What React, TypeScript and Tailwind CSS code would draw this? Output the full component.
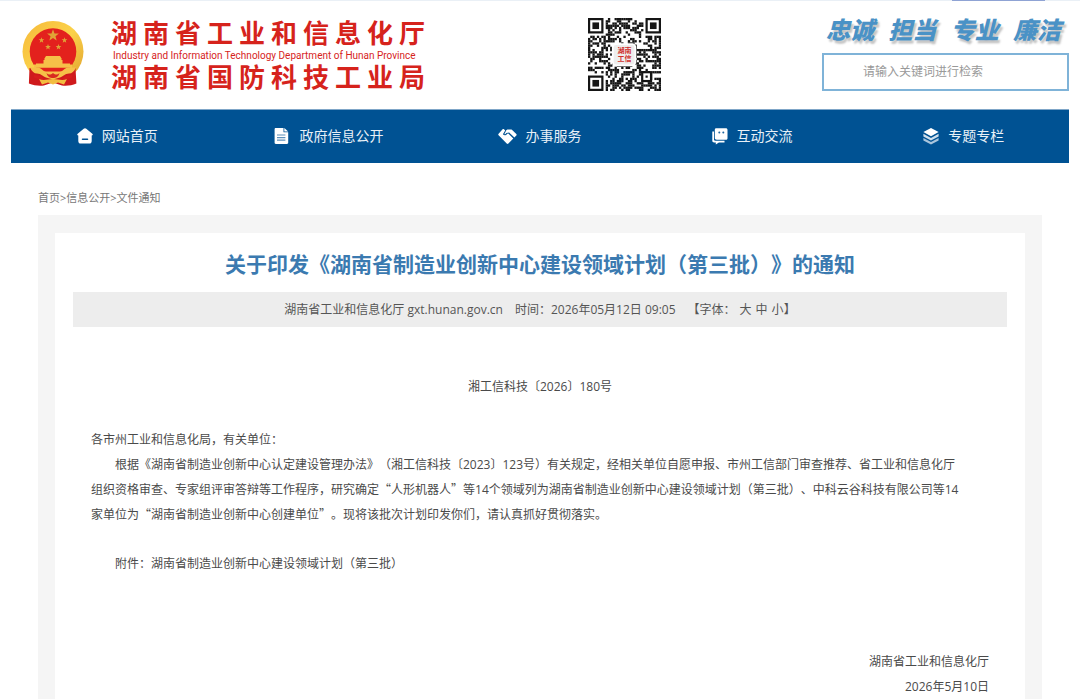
import type { ReactNode } from 'react'

type NavItem = {
	label: string
	icon: ReactNode
}

const HomeIcon = () => (
	<svg viewBox="0 0 18 18" className="size-[18px]" fill="#fff">
		<path d="M9 1.2c.5 0 .9.2 1.3.5l6 5c.8.7.6 1.6-.6 1.7V14c0 1.600-.9 2.600-2.500 2.600H4.800c-1.600 0-2.500-1-2.500-2.600V8.400C1.100 8.300.9 7.400 1.700 6.700l6-5C8.100 1.400 8.500 1.200 9 1.200z" />
		<path d="M6.500 12.300h5" stroke="#005293" strokeWidth="1.500" strokeLinecap="round" />
	</svg>
)

const FileIcon = () => (
	<svg viewBox="0 0 18 18" className="size-[18px]" fill="#fff">
		<path d="M2.800 1h7.700v4.200h4.700v10.600c0 .7-.5 1.200-1.200 1.200H2.800c-.7 0-1.200-.5-1.200-1.200V2.200C1.600 1.500 2.100 1 2.800 1z" />
		<path d="M11.300 1l3.900 3.500h-3.900z" />
		<path d="M4 8h8.400M4 10.600h8.400M4 13.200h8.400" stroke="#5d90ba" strokeWidth="1.200" />
	</svg>
)

const ServiceIcon = () => (
	<svg viewBox="0 0 19 18" className="h-[18px] w-[19px]" fill="#fff">
		<path d="M4.600 2.300c.4-.4 1-.4 1.400 0l1.200 1.200-2.300 3.800c1.300 1.500 3 1.300 4.300-.5l1.100-.3 5 5-4.900 5.100c-.5.6-1.200.6-1.700 0L.6 8.300c-.5-.5-.5-1.100 0-1.600z" />
		<path d="M8.300 3.200l1-.8h3.600c.4 0 .7.200 1 .4l4.400 4.300c.5.500.5 1 0 1.500l-1.900 2-5.300-5.200-2.700.700c-.6 1-1.300 1.300-2 .8z" />
	</svg>
)

const ChatIcon = () => (
	<svg viewBox="0 0 18 18" className="size-[18px]" fill="#fff">
		<path d="M5.200 1.200h9.600c1 0 1.700.7 1.700 1.600v8.400c0 1-.7 1.600-1.700 1.600H5.900c-1.400 0-2.100-.7-2.100-1.700V2.800c0-1 .5-1.600 1.400-1.600z" />
		<path d="M1.300 4.500h1.700v8c0 .8.500 1.200 1.300 1.200h9.200v1.700H7.900l-3.100 2.200v-2.200H3.200c-1.200 0-1.900-.6-1.900-1.700z" />
		<g fill="#1f67a1">
			<circle cx="8.300" cy="5.500" r="1" />
			<circle cx="12.300" cy="5.500" r="1" />
		</g>
	</svg>
)

const LayersIcon = () => (
	<svg viewBox="0 0 18 18" className="size-[18px]">
		<path d="M9 1l7.600 4L9 9.300 1.400 5z" fill="#fff" />
		<path d="M1.400 6.800L9 11.100l7.600-4.300v2.800L9 13.600 1.400 9.600z" fill="#cfdfec" />
		<path d="M1.400 11L9 15l7.600-4v2.400L9 17.400l-7.600-4z" fill="#a9c5dc" />
	</svg>
)

const navItems: NavItem[] = [
	{ label: '网站首页', icon: <HomeIcon /> },
	{ label: '政府信息公开', icon: <FileIcon /> },
	{ label: '办事服务', icon: <ServiceIcon /> },
	{ label: '互动交流', icon: <ChatIcon /> },
	{ label: '专题专栏', icon: <LayersIcon /> },
]

const slogans = ['忠诚', '担当', '专业', '廉洁']

const star = (cx: number, cy: number, r: number) =>
	Array.from({ length: 10 }, (_, i) => {
		const radius = i % 2 === 0 ? r : r * 0.42
		const angle = (Math.PI / 5) * i - Math.PI / 2
		return `${cx + radius * Math.cos(angle)},${cy + radius * Math.sin(angle)}`
	}).join(' ')

const Emblem = () => (
	<svg viewBox="0 0 62 66" className="h-[66px] w-[62px] shrink-0">
		<defs>
			<linearGradient id="gold" x1="0" y1="0" x2="1" y2="1">
				<stop offset="0" stopColor="#f6b93a" />
				<stop offset="0.5" stopColor="#fbd24a" />
				<stop offset="1" stopColor="#dfa02c" />
			</linearGradient>
		</defs>
		<circle cx="31" cy="30.500" r="30.500" fill="url(#gold)" />
		<path d="M7.500 47l-.6 15.500c5 2 10 2.500 15 2l9-3 9 3c5 .5 10 0 14.500-2L53.500 47z" fill="#cf1a1c" />
		<circle cx="31" cy="30.500" r="23.300" fill="#e3211d" />
		<g fill="#e0a336">
			<polygon points={star(31, 14.500, 6.200)} />
			<polygon points={star(19.500, 19.200, 3)} />
			<polygon points={star(42.500, 19.200, 3)} />
			<polygon points={star(26, 26, 3)} />
			<polygon points={star(36.500, 26, 3)} />
		</g>
		<g fill="#f6c048">
			<path d="M24 35h14l1.500 2.500v1.500h-17v-1.500z" />
			<path d="M21.500 39h19v3.500h7.500V45H14v-2.500h7.500z" />
			<path d="M12 43.500h38v3.200H12z" />
			<path d="M8 46.500h8c3 0 5 4 8 4h14c3 0 5-4 8-4h8c-2 4-4 6-7 6-4 0-6 3-9 4l-7 2-7-2c-3-1-5-4-9-4-3 0-5-2-7-6z" />
		</g>
		<path d="M12 54c4 0 7 1 10 3.500-4 1-7 .5-10-1zM50 54c-4 0-7 1-10 3.500 4 1 7 .5 10-1z" fill="#d71d1d" />
		<path d="M24.500 52c2 2 4 2 6.500 0 2.500 2 4.500 2 6.500 0-1 4-3.500 5-6.500 5s-5.500-1-6.500-5z" fill="#d92a1f" />
		<path d="M17 58c5 2 9 0 14 0s9 2 14 0l-3 5.500-6-2-5 2-5-2-6 2z" fill="#f2bd40" />
	</svg>
)

const QR_SIZE = 33

const isFinderZone = (x: number, y: number) =>
	(x < 8 && y < 8) || (x > QR_SIZE - 9 && y < 8) || (x < 8 && y > QR_SIZE - 9)

const qrModules = () => {
	const modules: { x: number; y: number }[] = []
	let seed = 20260512
	for (let y = 0; y < QR_SIZE; y++) {
		for (let x = 0; x < QR_SIZE; x++) {
			seed = (Math.imul(seed, 1664525) + 1013904223) >>> 0
			if (!isFinderZone(x, y) && seed / 4294967296 < 0.52) modules.push({ x, y })
		}
	}
	return modules
}

const Finder = ({ x, y }: { x: number; y: number }) => (
	<g>
		<rect x={x + 0.5} y={y + 0.5} width="6" height="6" fill="#fff" stroke="#151515" />
		<rect x={x + 2} y={y + 2} width="3" height="3" fill="#151515" />
	</g>
)

const QrCode = () => (
	<div className="relative size-[73px]">
		<svg viewBox="0 0 33 33" className="size-full" role="img">
			{qrModules().map(({ x, y }) => (
				<rect key={`${x}-${y}`} x={x} y={y} width="1.050" height="1.050" fill="#151515" />
			))}
			<Finder x={0} y={0} />
			<Finder x={26} y={0} />
			<Finder x={0} y={26} />
			<rect x="24" y="24" width="5" height="5" fill="#151515" />
			<rect x="25" y="25" width="3" height="3" fill="#fff" />
			<rect x="26" y="26" width="1" height="1" fill="#151515" />
			<rect x="11.200" y="11.800" width="10.200" height="9.600" rx="1.500" fill="#eee" stroke="#fff" strokeWidth="0.800" />
		</svg>
		<div className="absolute inset-0 flex flex-col items-center justify-center text-[7px] leading-[8px] font-bold text-[#d0302c]">
			<span>湖南</span>
			<span>工信</span>
		</div>
	</div>
)

const Header = () => (
	<header className="flex h-[108px] items-start justify-between pr-[11px] pl-[22px]">
		<div className="flex gap-[27px] pt-[18px]">
			<div className="pt-[2px]">
				<Emblem />
			</div>
			<div className="font-['Liberation_Sans','Noto_Sans_CJK_SC',sans-serif] whitespace-nowrap text-[#d6231c]">
				<p className="text-[26px] leading-[30px] font-bold tracking-[6px]">湖南省工业和信息化厅</p>
				<p className="pl-[2px] font-['Roboto'] text-[10px] leading-[14px]">
					Industry and Information Technology Department of Hunan Province
				</p>
				<p className="text-[26px] leading-[30px] font-bold tracking-[6px]">湖南省国防科技工业局</p>
			</div>
		</div>
		<div className="pt-[17px] pr-1">
			<QrCode />
		</div>
		<div className="w-[247px] pt-[12px]">
			<div className="flex justify-between pr-2 pl-1 text-2xl leading-[34px] font-black text-[#4a92c6] italic [text-shadow:2px_3px_2px_#c4c4c4]">
				{slogans.map((slogan) => (
					<span key={slogan}>{slogan}</span>
				))}
			</div>
			<input
				type="search"
				aria-label="搜索"
				placeholder="请输入关键词进行检索"
				className="mt-[6px] h-[38px] w-full border-2 border-[#7fb3d8] bg-white pr-4 pb-[2px] pl-[39px] text-xs outline-none placeholder:text-[#999]"
			/>
		</div>
	</header>
)

const Nav = () => (
	<nav className="mx-[11px] flex h-[54px] border-t border-[#7fa6c8] bg-[#005293] pb-[2px]">
		{navItems.map((item) => (
			<a key={item.label} href="#" className="flex flex-1 items-center justify-center gap-2 text-sm text-[#e8f0f7]">
				{item.icon}
				<span>{item.label}</span>
			</a>
		))}
	</nav>
)

const Breadcrumb = () => (
	<div className="flex px-[38px] pt-[25px] pb-[7px] text-[11px] leading-5 text-[#777]">
		<a href="#">首页</a>
		<span>&gt;</span>
		<a href="#">信息公开</a>
		<span>&gt;</span>
		<a href="#">文件通知</a>
	</div>
)

const Article = () => (
	<main className="mx-[38px] flex-1 bg-[#f5f5f5] px-[17px] pt-[18px]">
		<article className="min-h-full bg-white px-[18px] pt-[14px]">
			<h1 className="text-center text-[21px] leading-[34px] font-bold text-[#3b7ab0]">
				关于印发《湖南省制造业创新中心建设领域计划（第三批）》的通知
			</h1>
			<div className="mt-[11px] flex h-[35px] items-center justify-center gap-3 bg-[#ededed] text-xs text-[#555]">
				<span>湖南省工业和信息化厅 gxt.hunan.gov.cn</span>
				<span>时间：2026年05月12日 09:05</span>
				<div className="flex">
					<span>【字体：</span>
					<div className="flex gap-1 pl-1">
						<button type="button">大</button>
						<button type="button">中</button>
						<button type="button">小</button>
					</div>
					<span>】</span>
				</div>
			</div>
			<div className="px-[18px] pt-[47px] text-xs leading-[25px] text-[#4a4a4a]">
				<p className="text-center">湘工信科技〔2026〕180号</p>
				<p className="mt-7">各市州工业和信息化局，有关单位：</p>
				<p className="indent-[24px]">
					根据《湖南省制造业创新中心认定建设管理办法》（湘工信科技〔2023〕123号）有关规定，经相关单位自愿申报、市州工信部门审查推荐、省工业和信息化厅
					<br />
					组织资格审查、专家组评审答辩等工作程序，研究确定
					<span className="font-['Noto_Sans_CJK_SC'] leading-none">“人形机器人”</span>
					等14个领域列为湖南省制造业创新中心建设领域计划（第三批）、中科云谷科技有限公司等14
					<br />
					家单位为
					<span className="font-['Noto_Sans_CJK_SC'] leading-none">“湖南省制造业创新中心创建单位”</span>
					。现将该批次计划印发你们，请认真抓好贯彻落实。
				</p>
				<p className="mt-6 indent-[24px]">附件：湖南省制造业创新中心建设领域计划（第三批）</p>
				<div className="mt-[73px] text-right">
					<p>湖南省工业和信息化厅</p>
					<p>2026年5月10日</p>
				</div>
			</div>
		</article>
	</main>
)

export default () => {
	return (
		<div
			lang="zh-CN"
			className="flex min-h-screen flex-col bg-white font-['Open_Sans','Noto_Sans_CJK_SC',sans-serif] [text-spacing-trim:space-all]"
		>
			<div className="flex h-px justify-end bg-[#eaf0f6] pr-[35px]">
				<div className="w-[93px] bg-[#8fa3d4]" />
			</div>
			<Header />
			<Nav />
			<Breadcrumb />
			<Article />
		</div>
	)
}
